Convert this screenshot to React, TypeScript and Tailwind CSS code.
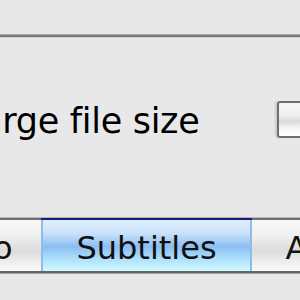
const font = { fontFamily: '"DejaVu Sans", "Liberation Sans", sans-serif' }

const tabs = [
  { label: 'Audio', w: 'w-[148px]', active: false },
  { label: 'Subtitles', w: 'w-[211px]', active: true },
  { label: 'Advanced', w: 'w-[225px]', active: false },
]

function Tab({ label, w, active }: { label: string; w: string; active: boolean }) {
  if (active) {
    return (
      <div className={`${w} shrink-0 h-[53px] border-t-2 border-[#1b1b7d]`}>
        <div className="h-[51px] border-x-2 border-[#8fbde9] bg-[linear-gradient(to_bottom,#e0eefc_0%,#cce2f9_25%,#a9cff6_40%,#8dbdf3_52%,#a3d8fa_70%,#d2fbff_100%)] text-center pt-[8px] leading-[40px] text-[32px] text-[#111]">
          {label}
        </div>
      </div>
    )
  }
  return (
    <div className={`${w} shrink-0 h-[53px] border-t-2 border-[#707070]`}>
      <div className="h-[51px] bg-[linear-gradient(to_bottom,#f8f8f8_0%,#f0f0f0_30%,#e2e2e2_50%,#dcdcdc_62%,#eeeeee_82%,#fafafa_100%)] text-center pt-[8px] leading-[40px] text-[32px] text-[#111]">
        {label}
      </div>
    </div>
  )
}

export default function App() {
  return (
    <div className="w-[300px] h-[300px] overflow-hidden bg-[#e8e8e8] flex flex-col" style={font}>
      <div className="h-[34px] shrink-0" />
      <div className="h-[1px] bg-[#aaaaaa] shrink-0" />
      <div className="h-[2px] bg-[#787878] shrink-0" />
      <div className="h-[1px] bg-[#d2d2d2] shrink-0" />

      <div className="mt-[63px] h-[40px] shrink-0 flex items-start overflow-hidden">
        <div className="w-[277px] shrink-0 overflow-hidden">
          <div className="ml-[-38px] whitespace-nowrap text-[35px] leading-[40px] tracking-[-0.3px] text-black">
            Large file size
          </div>
        </div>
        <div className="w-[37px] h-[37px] shrink-0 rounded-[3px] border-2 border-[#6e6e6e] bg-[linear-gradient(to_bottom,#f6f6f6_0%,#efefef_40%,#dadada_55%,#f4f4f4_75%,#ffffff_100%)] shadow-[-2px_0_2px_rgba(0,0,0,0.12)]" />
      </div>

      <div className="mt-[76px] shrink-0">
        <div className="h-[1px] bg-[#b4b4b4]" />
        <div className="flex ml-[-107px]">
          {tabs.map((t) => (
            <Tab key={t.label} {...t} />
          ))}
        </div>
        <div className="h-[2px] bg-[#666666]" />
        <div className="h-[1px] bg-[#a4a4a4]" />
      </div>
    </div>
  )
}
